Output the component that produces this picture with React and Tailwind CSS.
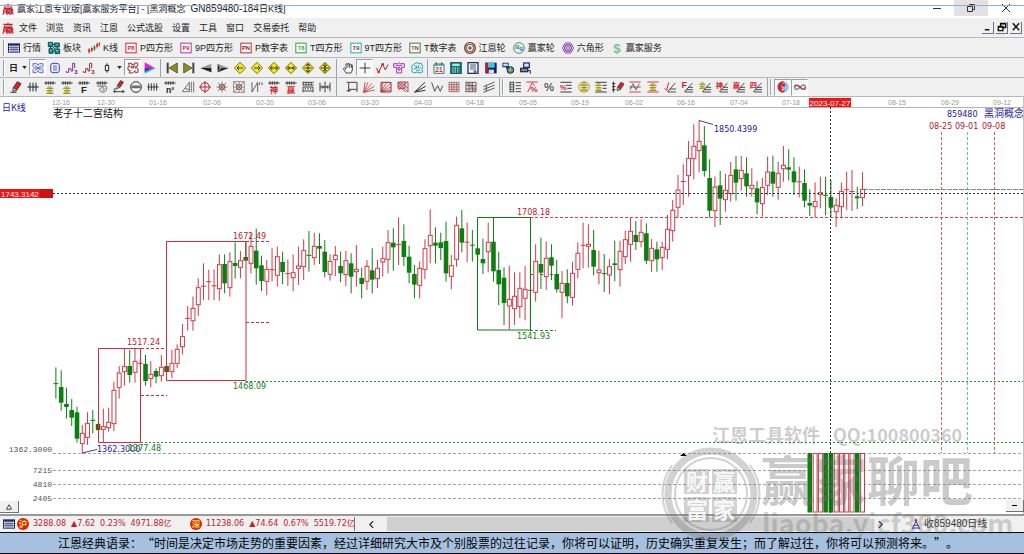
import React from "react";

const R = "#d8232a";
const K = "#222";
const Y = "#a09a10";

/* Icons are drawn on a 36-unit grid. */
function Icon({ children }) {
  return (
    <svg viewBox="0 0 36 36" className="h-3 w-3 shrink-0 overflow-visible" aria-hidden="true">
      {children}
    </svg>
  );
}

function P({ d, c = K, w = 2.6, f = "none" }) {
  return <path d={d} stroke={c} strokeWidth={w} fill={f} />;
}

function Glyph({ x = 18, y, s, c, children, bold = true }) {
  return (
    <text x={x} y={y} fontSize={s} fill={c} textAnchor="middle" fontWeight={bold ? 700 : 400}
      className="font-['Liberation_Sans','Noto_Sans_CJK_SC',sans-serif]">{children}</text>
  );
}

function LogoIcon() {
  return (
    <Icon>
      <P c="#c4202c" w={3.4} d="M4 7H32M18 2V7M7 12H29M7 12V17H29V12M3 21H13V34M5 21V31L2 35M5 27H13M16 20H24V30M16 20V30M20 23V30L15 35M21 30L25 35M27 20H32V33H35M28 20V30L25 35" />
    </Icon>
  );
}

function Boxed({ t, c, tc = R }) {
  return (
    <Icon>
      <rect x="2.5" y="3.5" width="31" height="29" fill="#fff" stroke={c} strokeWidth="3" />
      <Glyph y={24.5} s={17} c={tc}>{t}</Glyph>
    </Icon>
  );
}

function GridIcon() {
  return (
    <Icon>
      <rect x="0" y="4" width="36" height="28" fill="#1c2a6b" />
      <path d="M3 11H33V29H3Z" fill="#fff" />
      <path d="M3 17H33M3 23H33M9 11V29M15 11V29M21 11V29M27 11V29" stroke="#1c2a6b" strokeWidth="2" />
    </Icon>
  );
}

function BlocksIcon() {
  return (
    <Icon>
      <path d="M1 1H14V14H1ZM20 3H34V15H20ZM3 20H15V34H3ZM21 21H35V35H21Z" fill="#15918f" stroke="#063f45" strokeWidth="2.6" />
      <path d="M14 7H20M8 14V20M28 15V21M15 27H21M13 13L22 22" stroke="#063f45" strokeWidth="3" />
      <path d="M4 4H10V7H4ZM23 6H30V8H23ZM6 23H11V26H6ZM24 24H31V27H24Z" fill="#5fe0d8" />
    </Icon>
  );
}

function KIcon() {
  return (
    <Icon>
      <path d="M3 18V35M11 14V31M27 2V20M34 0V14" stroke={R} strokeWidth="2" />
      <path d="M1 22H6V31H1ZM9 18H14V27H9ZM25 5H30V15H25ZM32 3H36V10H32Z" fill={R} />
      <path d="M19 9V27" stroke="#0a8a0a" strokeWidth="2" />
      <path d="M17 13H22V23H17Z" fill="#0a8a0a" />
    </Icon>
  );
}

function Rings({ colors }) {
  return (
    <Icon>
      <circle cx="18" cy="18" r="16" fill="#fff" stroke={colors[0]} strokeWidth="4" />
      <circle cx="18" cy="18" r="10.5" fill="none" stroke={colors[1]} strokeWidth="3.6" />
      <circle cx="18" cy="18" r="5" fill={colors[2]} />
    </Icon>
  );
}

function HexIcon() {
  return (
    <Icon>
      <P c="#a33aa0" w={3} f="#fff" d="M10 3H26L35 18L26 33H10L1 18Z" />
      <circle cx="18" cy="18" r="10" fill="none" stroke="#3a42c8" strokeWidth="3.6" />
      <circle cx="18" cy="18" r="4.5" fill="#fff" stroke={R} strokeWidth="3" />
    </Icon>
  );
}

function BgIcon() {
  return (
    <Icon>
      <circle cx="18" cy="18" r="16" fill="#e8f4ee" stroke="#4a8f8a" strokeWidth="3" />
      <Glyph x={13} y={22} s={18} c="#2f9a3c">B</Glyph>
      <Glyph x={24} y={25} s={18} c="#3d77b8">g</Glyph>
    </Icon>
  );
}

function Diamond({ d }) {
  return (
    <Icon>
      <path d="M18 1L35 18L18 35L1 18Z" fill="#f2ee1c" stroke="#55520a" strokeWidth="2.4" />
      <path d={d} stroke="#222" strokeWidth="2.6" fill="none" />
    </Icon>
  );
}

const ticks = "M1 6H35M6 1V11M13 1V11M20 1V11M27 1V11";

function Ruler({ t, c, s = 24 }) {
  return <Icon><P d={ticks} /><Glyph y={35} s={s} c={c}>{t}</Glyph></Icon>;
}

function Levels({ t, c, s = 22, right = "#333" }) {
  return (
    <Icon>
      <P c={right} d="M12 33H36M16 26H36M21 19H36M10 33L34 6" />
      <Glyph x={10} y={22} s={s} c={c}>{t}</Glyph>
    </Icon>
  );
}

function Banded({ children, c = R }) {
  return <Icon><P c={c} d="M1 3H35M1 33H35" />{children}</Icon>;
}

const mainTools = [
  ["行情", <GridIcon />], ["板块", <BlocksIcon />], ["K线", <KIcon />],
  ["P四方形", <Boxed t="P8" c={R} />], ["9P四方形", <Boxed t="P9" c="#b030b8" />],
  ["P数字表", <Boxed t="PN" c="#c0282c" tc="#8a1a1a" />], ["T四方形", <Boxed t="T8" c="#26a838" tc="#26a838" />],
  ["9T四方形", <Boxed t="T9" c="#20a8b0" tc="#8a2a2a" />], ["T数字表", <Boxed t="TN" c="#1f8f3a" tc="#c0282c" />],
  ["江恩轮", <Rings colors={["#8c2a2a", "#3c7a4a", "#b83030"]} />], ["赢家轮", <BgIcon />], ["六角形", <HexIcon />],
  ["赢家服务", <Icon><Glyph y={32} s={40} c="#7cc28a">$</Glyph></Icon>],
];

const periodTools = [
  ["网络", true, <Icon><P c="#3d45cc" d="M3 5H15L18 10L22 5H33V14L28 18L33 23V32H22L18 26L13 32H3V23L8 18L3 13ZM8 10L28 27M28 10L8 27M9 18H27" w={2.4} /></Icon>],
  ["资料", false, <Icon><rect x="5" y="4" width="26" height="28" rx="7" fill="#eef" stroke="#3d45cc" strokeWidth="3" /><P c="#3d45cc" d="M12 12H24M12 18H24M12 24H24" w={2.4} /></Icon>],
  ["波段三", false, <Icon><P c="#8a2f96" d="M1 27V31H8V20H15V27H20V4H26V18" w={3} /><Glyph x={30} y={35} s={18} c="#5a2270">3</Glyph></Icon>],
  ["波段", false, <Icon><P c="#9b2f30" d="M1 27V31H8V20H15V27H20V4H26V18" w={3} /><Glyph x={30} y={35} s={18} c="#8d2020">3</Glyph></Icon>],
  ["蜡烛", false, <Icon><P d="M18 4V10M18 26V32M13 10H23V26H13Z" w={3} /></Icon>],
];

const viewTools = [
  ["地图", true, <Icon><P c="#a42a34" d="M4 4H14V8H22V3H32V12L27 15L33 21V31H24V26L17 33H6L10 26L3 24V14H8ZM13 13H20V18H13ZM23 10L26 20" w={3} /></Icon>],
  ["旗", false, <Icon><path d="M2 1L32 18H2Z" fill="#e81ed2" /><path d="M2 18H36L2 35Z" fill="#2fb5d6" /><path d="M2 18L24 18L2 30Z" fill="#4040a0" /></Icon>],
];

const moveTools = [
  ["最前", <Icon><path d="M2 2H8V34H2Z" fill="#444" /><path d="M34 3V33L9 18Z" fill="#8f8c1c" stroke="#333" strokeWidth="2" /></Icon>],
  ["最后", <Icon><path d="M28 2H34V34H28Z" fill="#444" /><path d="M2 3V33L27 18Z" fill="#8f8c1c" stroke="#333" strokeWidth="2" /></Icon>],
  ["向左", <Icon><path d="M34 5V31L1 18Z" fill="#999" /><path d="M34 31L1 18H34Z" fill="#222" /></Icon>],
  ["向右", <Icon><path d="M2 5V31L35 18Z" fill="#999" /><path d="M2 31L35 18H14Z" fill="#222" /><path d="M2 5V31L8 18Z" fill="#222" /></Icon>],
  ["左移", <Diamond d="M9 18H27M15 12L9 18L15 24" />],
  ["右移", <Diamond d="M9 18H27M21 12L27 18L21 24" />],
  ["扩展", <Diamond d="M7 18H29M13 12L7 18L13 24M23 12L29 18L23 24" />],
  ["收缩", <Diamond d="M5 18H31M9 13L15 18L9 23M27 13L21 18L27 23" />],
  ["放大", <Diamond d="M7 18H29M18 6V30M12 11L18 6L24 11M12 25L18 30L24 25" />],
  ["缩小", <Diamond d="M5 18H31M18 4V32M12 9L18 14L24 9M12 27L18 22L24 27" />],
];

const pointerTools = [
  ["手形", false, <Icon><P f="#fff" w={2.4} d="M12 33L4 20L7 18L12 22V6L15 5L18 8V4L21 4L23 8L26 6L28 9L31 9V24L27 33ZM18 8V17M23 8V17M28 9V18" /></Icon>],
  ["十字", true, <Icon><P d="M18 2V34M2 18H34" w={2.6} /></Icon>],
  ["折线", false, <Icon><P c="#a02a30" d="M1 18L8 30L20 6L28 24L36 8" w={3} /><circle cx="8" cy="30" r="4" fill={R} /><circle cx="20" cy="7" r="4" fill={R} /></Icon>],
  ["图章", false, <Icon><P c="#a03cb4" w={3} f="#f6e4fa" d="M2 5H14L18 2L22 5H34V16H26V33H11V16H2ZM8 10H28M15 16H21V24H15Z" /></Icon>],
  ["云图", false, <Icon><P c="#2aa4a8" w={3} f="#dff6f6" d="M11 5L18 2L25 5L31 4L35 13L33 22L35 30L25 33L18 30L9 33L2 28L4 20L1 13ZM10 12H17V20H9M22 10V18H29M16 25H27" /></Icon>],
];

const fileTools = [
  ["日历", <Icon><path d="M3 6H33V34H3Z" fill="#fff" stroke="#357a7a" strokeWidth="3" /><path d="M3 6H33V12H3Z" fill="#4fb5b5" /><P d="M10 1V8M26 1V8" /><Glyph y={31} s={20} c={R}>21</Glyph></Icon>],
  ["计算器", <Icon><rect x="2" y="1" width="32" height="34" fill="#0c6f73" stroke="#063c40" strokeWidth="2" /><path d="M7 5H29V12H7Z" fill="#a7ece6" /><path d="M7 18H29M7 24H29M7 30H29" stroke="#fff" strokeWidth="3.4" strokeDasharray="4 3" /></Icon>],
  ["报表", <Icon><rect x="3" y="2" width="30" height="32" fill="#fff" stroke="#22306b" strokeWidth="4" /><P c="#22306b" d="M9 9H27M9 15H27M9 21H20M24 18V32M19 26L24 32L29 26" /></Icon>],
  ["保存", <Icon><path d="M1 2H35V34H1Z" fill="#111c6b" /><path d="M8 2H29V17H8Z" fill="#3fc8d4" /><path d="M1 2H8V34H1Z" fill="#c8202c" /><path d="M11 23H27V34H11Z" fill="#ddd" /></Icon>],
  ["网络行情", <Icon><path d="M1 2H20V16H1ZM12 14H22V20H12Z" fill="#223a8c" /><path d="M4 5H17V12H4Z" fill="#bfe7f4" /><circle cx="25" cy="24" r="10" fill="#3b8f4a" stroke="#123" strokeWidth="3" /><P c="#ddd" d="M17 24H34M25 15V34" w={2} /></Icon>],
  ["打印", <Icon><path d="M12 1H33V19H12Z" fill="#223a8c" /><path d="M16 5H29V14H16Z" fill="#d8ecf8" /><path d="M3 17H28V31H3Z" fill="#333" /><path d="M7 22H24V26H7Z" fill="#b8a8e0" /><P d="M26 26H34V35" w={3} /></Icon>],
];

const pen = (
  <g><path d="M22 2L33 8L20 28L9 31L10 20Z" fill="#d8232a" stroke="#222" strokeWidth="2.4" /><path d="M10 20L20 27L9 31Z" fill="#fff" stroke="#222" strokeWidth="2" /></g>
);

const drawA = [
  ["画笔", <Icon>{pen}<P d="M1 34H20" /></Icon>],
  ["等分线", <Icon><P d="M1 18H35M9 5V31M18 5V31M27 5V31" w={3} /></Icon>],
  ["金尺", <Ruler t="金" c={Y} s={25} />],
  ["金段", <Ruler t="金" c={Y} s={25} />],
  ["斐波尺", <Ruler t="F" c={K} s={29} />],
  ["螺旋", <Icon><P d={ticks} /><P c="#555" d="M4 15H26C36 15 33 33 20 33C8 33 8 20 19 20C28 20 25 28 19 27" w={2.8} /></Icon>],
  ["量笔", <Icon><g transform="translate(5 -3) scale(.8)">{pen}</g><P d="M1 32H35M5 27V36M30 27V36M2 24H12" /></Icon>],
  ["量圆", <Icon><circle cx="18" cy="18" r="16" fill="none" stroke="#333" strokeWidth="3" /><P d="M4 18H32M9 13V22M15 13V22M21 13V22M27 13V22" w={2.4} /></Icon>],
  ["刻度", <Icon><P d="M1 18H35M5 7V29M13 7V29M21 7V29M29 7V29" w={2.6} /></Icon>],
  ["平方尺", <Ruler t="n²" c={K} s={26} />],
  ["角尺", <Icon><P c="#555" d="M1 32L22 4V32ZM28 2V34M35 2V34M9 22L24 27" w={2.4} /></Icon>],
  ["圆周", <Icon><circle cx="18" cy="18" r="13" fill="none" stroke="#8d2a2a" strokeWidth="3" /><P c={R} d="M18 0V36M0 18H36" w={3} /></Icon>],
  ["放射", <Icon><P c="#777" d="M18 2V34M2 18H34M6 6L30 30M30 6L6 30" w={3} /><circle cx="18" cy="18" r="8" fill="none" stroke="#a04444" strokeWidth="3" /></Icon>],
  ["方阵", <Icon><P c="#777" d="M2 2H34V34H2ZM2 2L34 34M34 2L2 34M18 2V34M2 18H34" w={2.4} /><P c="#a04444" d="M11 11H25V25H11Z" /></Icon>],
  ["回调", <Icon><P c="#555" d="M3 4V33L20 4V33M26 4V12M33 4V12" w={2.8} /></Icon>],
  ["神尺", <Ruler t="神" c={R} s={25} />],
  ["赢尺", <Ruler t="赢" c={R} s={25} />],
  ["周期", <Icon><P d="M1 4H35M1 12H35M4 4V12M12 4V12M20 4V12M28 4V12M3 34V18H33V34M10 20V26M18 20V26M26 20V26M3 30H33" w={2.4} /></Icon>],
  ["对称", <Icon><P d="M3 5V31M18 2V34M33 5V31M3 18H33M9 13L13 18L9 23M27 13L23 18L27 23" w={2.6} /></Icon>],
];

const drawB = [
  ["矩形", <Icon><P c="#444" d="M8 4H33V25H8ZM2 4H8M8 25V33M2 29H14M33 25V33" w={3} /></Icon>],
  ["扇形", <Icon><P c="#c03030" d="M2 34L6 3M2 34L15 4M2 34L27 7M2 34L34 16M2 34L35 27" w={2.4} /></Icon>],
  ["方扇", <Icon><P c="#712" d="M3 4H33V33H3Z" w={2.6} /><P c="#c03030" d="M3 33L9 4M3 33L20 4M3 33L33 6M3 33L33 18M3 33L33 27" w={2.4} /></Icon>],
  ["网扇", <Icon><path d="M3 3H33L3 33Z" fill="#e8b0b0" /><P c="#a02c40" d="M3 3H33V33M3 3L33 33M3 3V22H24V3M10 3L33 22M3 12L26 33" w={2.4} /></Icon>],
  ["速度线", <Icon><P d="M2 33L33 4M2 33L35 16M2 33L34 28" w={2.8} /></Icon>],
  ["波浪", <Icon><P c="#444" d="M2 4L11 31L20 14L28 31L35 14" w={2.8} /></Icon>],
  ["网格", <Icon><P c="#a05050" d="M3 4H33V32H3ZM3 11H33M3 18H33M3 25H33M11 4V32M18 4V32M26 4V32" w={2.4} /></Icon>],
  ["斜网", <Icon><P c="#444" d="M3 2V34M3 4H33V32H3M12 4V32M22 4V32M3 14H33M3 24H33" w={2.4} /><P c="#b04040" d="M3 4L33 32M12 4L33 24" w={2.4} /></Icon>],
  ["通道", <Icon><P c="#444" d="M1 17L35 3M1 26L35 12M1 34L35 21M10 13V30" w={2.6} /></Icon>],
];

const drawC = [
  ["标尺", <Icon><P d="M3 2V34M14 2V34M3 4H14M3 11H14M3 18H14M3 25H14M3 32H14M20 5H36M20 14H36M20 23H36M20 32H36" w={2.4} /></Icon>],
  ["百分线", <Icon><P c={R} d="M1 3H35M5 33L19 5L26 14" w={2.6} /><Glyph x={24} y={33} s={24} c={R}>%</Glyph></Icon>],
  ["百分比", <Icon><Glyph y={30} s={34} c={K} bold={false}>%</Glyph></Icon>],
  ["百分层", <Icon><P d="M1 4H35M18 13H35M22 22H35M1 33H35" /><Glyph x={10} y={28} s={22} c={R}>%</Glyph></Icon>],
  ["金圆", <Icon><circle cx="18" cy="18" r="16" fill="none" stroke={Y} strokeWidth="2.6" /><Glyph y={28} s={26} c={Y}>金</Glyph></Icon>],
  ["金层", <Icon><P d="M1 4H35M23 13H35M23 22H35M1 33H35" /><Glyph x={11} y={28} s={23} c={Y}>金</Glyph></Icon>],
  ["量柱笔", <Icon><P d="M4 2V34M1 8H10M1 17H10M1 26H10" w={3} /><g transform="translate(8 2) scale(.85)">{pen}</g></Icon>],
  ["波带", <Banded><P c="#555" d="M1 18H35M3 27L12 8L21 27L31 8" /></Banded>],
  ["金带", <Banded><Glyph y={28} s={25} c={Y}>金</Glyph></Banded>],
  ["角度层", <Icon><P c="#333" d="M12 33H36M18 24H36M10 33L34 6" /><P c={R} d="M2 22L8 28L14 4" w={3} /></Icon>],
  ["斐波层", <Levels t="F" c={R} s={27} />],
  ["金线层", <Levels t="金" c={Y} />],
  ["神层", <Levels t="神" c={R} />],
  ["赢层", <Levels t="赢" c={R} />],
  ["四层", <Levels t="四" c={R} />],
];

const drawD = [
  ["太极", <Icon><circle cx="18" cy="18" r="17" fill="#8fc4ee" /><path d="M22 1A17 17 0 1 0 16 35C26 32 24 26 18 24C10 20 14 6 22 1Z" fill="#d8232a" /><circle cx="20" cy="12" r="5" fill="#d8232a" /><circle cx="17" cy="26" r="3" fill="#fff" /></Icon>],
  ["无限", <Icon><P c="#3a8fc8" d="M2 20C4 28 12 26 18 19C24 11 32 10 34 17" w={4.4} /><P c="#c83030" d="M2 20C1 11 10 10 18 18C26 28 35 27 34 17" w={4.4} /></Icon>],
];

function Grip() {
  return <span className="h-4 w-[2px] shrink-0 border-l border-gray-400 bg-white" />;
}

function Tool({ name, pressed = false, children }) {
  return (
    <button type="button" aria-label={name} title={name} aria-pressed={pressed}
      className={pressed
        ? "flex h-[17px] w-[17px] shrink-0 items-center justify-center border border-r-white border-b-white border-gray-400 bg-[#f8f8f8]"
        : "flex h-[17px] w-[17px] shrink-0 items-center justify-center"}>
      {children}
    </button>
  );
}

function Drop() {
  return (
    <svg viewBox="0 0 6 4" className="h-[3px] w-[5px] shrink-0" aria-hidden="true"><path d="M0 0H6L3 4Z" fill="#222" /></svg>
  );
}

/* Candles: colour, high, body top, body bottom, low, in thirds of a unit below the segment's base. */
const segments = [
  [330, "g112,160,162,206 g121,171,218,242 g173,222,231,266 g207,240,263,288 g230,247,326,338 r285,310,341,371 r247,280,322,345 g240,270,272,310 d280,282,300,302 r236,290,298,336 r233,277,293,305 r155,181,281,303 r108,129,172,206 r55,110,125,167 g60,108,135,158 r55,94,127,158 r88,99,101,112 g75,102,153,167 r94,133,146,172 g115,123,140,160 r75,112,137,155 d105,108,126,130"],
  [210, "r420,460,485,505 r403,418,460,475 r342,380,410,433 r288,324,326,362 r260,295,332,362 r205,233,284,318 r160,227,230,270 r180,213,217,270 r178,226,229,270 r133,164,236,272 g133,162,220,250 r127,155,233,260 g97,159,168,206 r123,152,172,205 g97,141,152,152 r70,109,160,190 g56,122,175,224 g137,166,213,243 r150,178,214,256 r115,177,181,215 r110,140,196,230 g125,156,186,222 r148,190,192,228 r133,188,203,244 r110,168,175,225 r88,122,170,210 g63,135,137,185 r68,109,143,165 g70,108,116,162 g90,125,186,202 r133,154,193,212 r108,136,149,198 g125,168,190,216 r123,152,194,228 g130,160,200,250 r105,178,185,230 g173,204,222,265 r150,169,214,240 g115,181,209,250 r150,175,206,234 r110,146,156,200 r60,98,148,190 g55,98,112,182 r22,103,105,165"],
  [190, "g103,153,201,228 g167,200,248,280 g225,252,284,325 r215,235,286,325 r148,176,238,268 r58,136,167,220 g112,158,167,220 g128,157,174,210 g95,153,250,275 r195,227,259,298 r80,106,208,230 g60,115,158,187 r97,155,158,216 g120,164,167,215 g172,175,194,215 g146,207,220,252 r98,157,185,247 g83,155,244,275 g185,240,283,345 g232,263,339,405 r227,328,348,418 r247,319,356,405 r247,295,350,384 r228,298,325,391 r215,300,302,415 r163,214,307,335 g143,222,248,297 r155,205,260,300 g163,202,227,270 g210,252,298,308 r243,280,307,385 g238,279,319,340 r215,250,322,347 r157,190,238,265 r98,164,168,235 r103,163,169,233 g120,180,230,256 r182,240,248,283 g192,249,253,306 r207,230,255,312 g152,220,225,273 r152,184,239,290 r122,149,200,222 r83,124,163,215 g93,135,156,180 r88,127,155,172 g100,130,212,222 r147,175,212,246 g155,178,208,245 r155,172,203,240 r75,118,178,208 r30,61,122,155"],
  [100, "r225,270,322,352 r193,243,246,315 r123,175,227,290 r73,139,176,238 r62,124,152,217 g78,136,213,230 g178,234,332,353 r230,261,332,381 g213,256,296,375 r222,271,299,335 r186,226,281,305 g168,208,248,302 r168,211,236,272 g172,220,259,290 r205,256,265,290 g243,265,307,343 r234,262,311,350 r170,216,256,285 g167,215,251,290 r185,220,262,299 r138,196,206,245 g148,202,209,242 g172,214,247,285 r200,244,247,292 g208,249,302,322 g268,309,317,348 r247,305,320,352 r230,278,284,325 g230,285,287,346 g240,291,323,350 r295,316,335,381 r248,274,320,355 r215,267,271,330 r210,273,276,333 g260,289,295,327 r217,268,293,318"],
];

const candles = segments
  .flatMap(([base, rows]) => rows.split(" ").map((s) => [s[0], ...s.slice(1).split(",").map((v) => base + v / 3)]))
  .map(([k, h, t, b, l], i) => ({ k, h, t, b, l, x: 55.9 + i * 5.272 }));

const RED = "#cf3a48";
const GREEN = "#0d7f12";

function Candle({ k, h, t, b, l, x }) {
  const c = k === "g" ? GREEN : k === "d" ? "#4d5a08" : RED;
  const thin = b - t < 1.6;
  return (
    <g>
      {k === "r" && !thin
        ? <path d={`M${x} ${h}V${t}M${x} ${b}V${l}`} stroke={c} />
        : <path d={`M${x} ${h}V${l}`} stroke={c} />}
      {thin
        ? <path d={`M${x - 2.5} ${(t + b) / 2}H${x + 2.5}`} stroke={c} />
        : k === "r"
          ? <rect x={x - 1.9} y={t} width="3.9" height={b - t} fill="#fff" stroke={c} />
          : <rect x={x - 2.3} y={t} width="4.6" height={b - t} fill={c} />}
    </g>
  );
}

const dates = [[61, "12-16"], [106, "12-30"], [158, "01-16"], [212, "02-06"], [265, "02-20"], [317, "03-06"], [370, "03-20"], [423, "04-03"], [475, "04-18"], [528, "05-05"], [580, "05-19"], [634, "06-02"], [686, "06-16"], [739, "07-04"], [791, "07-18"], [897, "08-15"], [950, "08-29"], [1002, "09-12"]];

const priceLabels = [
  [714, 132, "1850.4399", "#1a1a9c"], [97, 452, "1362.3000", "#1a1a9c"], [128, 451, "1377.48", GREEN],
  [127, 345, "1517.24", "#c22032"], [233, 389, "1468.09", GREEN], [233, 239, "1672.49", "#c22032"],
  [517, 215, "1708.18", "#c22032"], [517, 339, "1541.93", GREEN],
  [929, 129, "08-25", "#b02030"], [955, 129, "09-01", "#b02030"], [982, 129, "09-08", "#b02030"],
];

function Chart() {
  return (
    <svg viewBox="0 97 1024 417" className="block h-auto w-full bg-white" role="img" aria-label="黑洞概念 日K线">
      <path d="M53 107.500H1023" stroke="#b4b4b4" />
      <g className="font-['Liberation_Sans',sans-serif] text-[7px]" fill="#999" textAnchor="middle">
        {dates.map(([x, t]) => <text key={t} x={x} y={105}>{t}</text>)}
      </g>
      <g className="font-['Noto_Sans_CJK_SC',sans-serif]">
        <text x="2" y="111" fill="#1a1ab8" className="text-[9px]">日K线</text>
        <text x="53" y="117" fill="#111" className="text-[10px]">老子十二宫结构</text>
        <text x="947" y="117" fill="#1a1a9c" className="font-['DejaVu_Sans',sans-serif] text-[8px]">859480</text>
        <text x="984" y="117" fill="#1a1a9c" className="text-[10px]">黑洞概念</text>
      </g>

      <g stroke="#a4a4a4" strokeDasharray="3 2">
        <path d="M53 453.500H1023M53 470.500H1023M53 484.500H1023M53 498.500H1023" />
      </g>
      <path d="M246 381.500H1023M141 442.500H1023" stroke="#1f9a2a" strokeDasharray="2 2" />
      <path d="M530 217.500H1023" stroke="#d8404e" strokeDasharray="3 2" />
      <path d="M246 241.500H271M246 322.500H271M141 348.500H167M141 395.500H167" stroke="#d02c40" strokeDasharray="3 2" />
      <path d="M530 274.500H556M530 330.500H556" stroke="#2c8a20" strokeDasharray="3 2" />
      <path d="M941.500 132V453M994.500 132V453" stroke="#d05c68" strokeDasharray="3 2" />
      <path d="M967.500 132V453" stroke="#5cb8ee" strokeDasharray="3 2" />
      <path d="M863 189.500H1023" stroke="#888" strokeDasharray="5 1" />

      {candles.map((c) => <Candle key={c.x} {...c} />)}
      {candles.slice(143).map((c) => c.k === "g"
        ? <rect key={c.x} x={c.x - 2.3} y="453" width="4.600" height="59.500" fill={GREEN} />
        : <rect key={c.x} x={c.x - 1.9} y="453.500" width="3.900" height="58.500" fill="#fff" stroke={RED} />)}

      <path d="M98.500 348.500H140.500V442.500H98.500ZM166.500 241.500H246V380.500H166.500Z" fill="none" stroke="#c8303e" />
      <path d="M477.500 217.500H530.500V330H477.500Z" fill="none" stroke={GREEN} />
      <path d="M53 193.500H1023M830.500 107V513" stroke="#333" strokeDasharray="2 2" />
      <path d="M699 120.500L713 124.500M82 453L97 449.500" stroke="#3a3ab0" />
      <path d="M680 456L683.500 453L687 456Z" fill="#000" />

      <g className="font-['DejaVu_Sans',sans-serif] text-[8px]">
        {priceLabels.map(([x, y, t, c]) => <text key={t} x={x} y={y} fill={c}>{t}</text>)}
      </g>
      <g className="font-['Liberation_Mono',monospace] text-[8px]" fill="#555" textAnchor="end">
        <text x="52" y="452">1362.3000</text><text x="52" y="473">7215</text>
        <text x="52" y="487">4810</text><text x="52" y="501">2405</text>
      </g>

      <rect x="0" y="189" width="53" height="9" fill="#f01414" />
      <rect x="40" y="189" width="13" height="9" fill="#d01010" />
      <text x="1" y="197" fill="#fff" className="font-['Liberation_Sans',sans-serif] text-[8px]">1743.3142</text>
      <rect x="809" y="98" width="42" height="9" fill="#f01414" />
      <text x="830" y="106" fill="#fff" textAnchor="middle" className="font-['Liberation_Sans',sans-serif] text-[8px]">2023-07-27</text>
      <path d="M1023.500 97V514" stroke="#c4c4c4" />
    </svg>
  );
}

function Watermark() {
  return (
    <svg viewBox="0 0 1024 554" className="pointer-events-none absolute inset-x-0 top-0 h-auto w-full" aria-hidden="true">
      <g fill="#6b6b6b" fillOpacity=".36" className="font-['Noto_Sans_CJK_SC',sans-serif] font-bold">
        <text x="712" y="442" className="text-[18px]">江恩工具软件</text>
        <text x="833" y="442" className="text-[18px]">QQ:100800360</text>
        <text x="761" y="501" className="text-[53px]">赢家聊吧</text>
        <text x="762" y="534" className="text-[27px]" fillOpacity=".28">liaoba.yicf360.com</text>
      </g>
      <g fill="none" stroke="#6b6b6b" strokeOpacity=".3">
        <circle cx="711" cy="494" r="43" strokeWidth="7" />
        <circle cx="711" cy="494" r="36" strokeWidth="2" />
        <path d="M672 465A49 49 0 0 0 672 523M750 465A49 49 0 0 1 750 523" strokeWidth="2" />
      </g>
      <path d="M684 469H709V494H684ZM712 469H737V494H712ZM684 497H709V522H684ZM712 497H737V522H712Z" fill="#6b6b6b" fillOpacity=".3" />
      <g fill="#fff" fillOpacity=".9" textAnchor="middle" className="font-['Noto_Sans_CJK_SC',sans-serif] text-[22px] font-bold">
        <text x="697" y="490">财</text><text x="724" y="490">赢</text>
        <text x="697" y="518">富</text><text x="724" y="518">家</text>
      </g>
    </svg>
  );
}

function Group({ items, className }) {
  return (
    <div className={`flex shrink-0 items-center justify-between ${className}`}>
      {items.map((it) => it.length === 3
        ? <Tool key={it[0]} name={it[0]} pressed={it[1]}>{it[2]}</Tool>
        : <Tool key={it[0]} name={it[0]}>{it[1]}</Tool>)}
    </div>
  );
}

function Divider() {
  return <span className="h-[18px] w-px shrink-0 bg-gray-400" />;
}

function Quote({ badge, values }) {
  return (
    <div className="flex shrink-0 items-center gap-1">
      <svg viewBox="0 0 36 36" className="h-3 w-3 shrink-0" aria-hidden="true">
        <circle cx="18" cy="18" r="18" fill="#e0200c" />
        <text x="18" y="27" fontSize="25" fontWeight="700" fill="#ffe14a" textAnchor="middle">{badge}</text>
      </svg>
      <div className="flex gap-[5px]">{values.map((v) => <span key={v}>{v}</span>)}</div>
    </div>
  );
}

export default function App() {
  return (
    <div className="relative flex flex-col overflow-hidden bg-white font-['Liberation_Sans','Noto_Sans_CJK_SC',sans-serif] text-[9px] leading-3 text-[#222]">
      <header className="relative flex h-[18px] items-center justify-between overflow-hidden bg-white pl-[2px]">
        <h1 className="flex items-center gap-[3px] whitespace-pre">
          <LogoIcon />
          <span>赢家江恩专业版[赢家服务平台] - [黑洞概念  <span className="text-[10px]">GN859480-184</span>日K线]</span>
        </h1>
        <div className="flex h-full items-start">
          <button type="button" aria-label="最小化" className="flex h-4 w-[34px] items-center justify-center">
            <svg viewBox="0 0 8 8" className="h-2 w-2"><path d="M0 4.500H8" stroke="#333" /></svg>
          </button>
          <button type="button" aria-label="还原" className="flex h-4 w-[34px] items-center justify-center bg-[#e2e2e2]">
            <svg viewBox="0 0 8 8" className="h-2 w-2" fill="none" stroke="#333"><path d="M.5 2.500H5.500V7.500H.5ZM2.500 2V.5H7.500V5.500H6" /></svg>
          </button>
          <button type="button" aria-label="关闭" className="flex h-4 w-9 items-center justify-center">
            <svg viewBox="0 0 8 8" className="h-2 w-2" stroke="#333"><path d="M0 0L8 8M8 0L0 8" /></svg>
          </button>
        </div>
        <span className="absolute inset-x-0 top-0 h-[6px] border-b border-[#8fb0d4]" />
      </header>

      <nav className="flex h-5 items-center justify-between border-b border-[#b8b8b8] bg-[#f0f0f0] pr-[2px] pl-[2px]">
        <div className="flex items-center gap-[9px]">
          <div className="flex items-center gap-[5px]"><LogoIcon /><button type="button">文件</button></div>
          {["浏览", "资讯", "江恩", "公式选股", "设置", "工具", "窗口", "交易委托", "帮助"].map((m) => (
            <button key={m} type="button">{m}</button>
          ))}
        </div>
        <div className="flex gap-[2px]">
          {[["最小化子窗口", "M2 8.500H7"], ["还原子窗口", "M1.500 5H6.500V9.500H1.500ZM1 5.500H7M4 4V1.500H9.500V6H7M4 2H9.500"], ["关闭子窗口", "M2 1.500L9 9M9 1.500L2 9"]].map(([n, d]) => (
            <button key={n} type="button" aria-label={n} className="flex h-3 w-3 items-center justify-center border-r border-b border-gray-500 bg-[#f0f0f0]">
              <svg viewBox="0 0 11 11" className="h-[10px] w-[10px]"><path d={d} fill="none" stroke="#111" strokeWidth="1.600" /></svg>
            </button>
          ))}
        </div>
      </nav>

      <div className="flex h-5 items-center gap-[3px] border-b border-[#b8b8b8] bg-[#f0f0f0] pl-[3px]">
        <Grip />
        <div className="flex items-center gap-[7px]">
          {mainTools.map(([t, icon]) => (
            <button key={t} type="button" className="flex items-center gap-[3px] whitespace-nowrap">{icon}<span>{t}</span></button>
          ))}
        </div>
      </div>

      <div className="flex h-5 items-center gap-[2px] border-b border-[#b8b8b8] bg-[#f0f0f0] pl-[3px]">
        <Grip />
        <button type="button" className="flex w-5 items-center justify-between pl-[2px] font-bold">日<Drop /></button>
        <Group items={periodTools} className="w-[86px]" />
        <Drop />
        <Group items={viewTools} className="w-[34px]" />
        <Divider />
        <Group items={moveTools} className="w-[171px]" />
        <Divider />
        <Group items={pointerTools} className="w-[86px]" />
        <Divider />
        <Group items={fileTools} className="w-[104px]" />
      </div>

      <div className="flex h-[19px] items-center gap-[2px] border-b border-[#b8b8b8] bg-[#f0f0f0] pl-[3px]">
        <Grip />
        <Group items={drawA} className="w-[327px]" />
        <Divider />
        <Group items={drawB} className="ml-1 w-[154px]" />
        <Divider /><Grip />
        <Group items={drawC} className="w-[259px]" />
        <Divider /><Grip />
        <div className="flex shrink-0">
          {drawD.map(([n, i]) => <Tool key={n} name={n} pressed>{i}</Tool>)}
        </div>
      </div>

      <main className="relative">
        <Chart />
        <button type="button" aria-label="展开" className="absolute bottom-[1px] left-0 flex h-3 w-[19px] items-center justify-center border-r border-b border-gray-500 bg-[#f0f0f0]">
          <svg viewBox="0 0 8 8" className="h-[6px] w-[6px]"><path d="M4 1L7.500 7H.5Z" fill="none" stroke="#111" /></svg>
        </button>
        <button type="button" aria-label="收起" className="absolute right-0 bottom-[2px] flex h-3 w-[18px] items-center justify-center border-r border-b border-gray-500 bg-[#f0f0f0]">
          <span className="h-px w-[5px] bg-black" />
        </button>
      </main>

      <div className="flex h-[18px] items-center border-t-2 border-[#999] bg-[#f0f0f0] pl-[3px] font-['DejaVu_Sans','Noto_Sans_CJK_SC',sans-serif] text-[8px] whitespace-pre text-[#c4202c]">
        <div className="flex w-[351px] shrink-0 items-center gap-[2px] overflow-hidden">
          <GridIcon />
          <div className="w-[171px] shrink-0"><Quote badge="沪" values={["3288.08", "▲7.62", "0.23%", "4971.88亿"]} /></div>
          <Quote badge="深" values={["11238.06", "▲74.64", "0.67%", "5519.72亿"]} />
        </div>
        <div className="flex h-[14px] grow items-center border-l border-gray-500">
          <button type="button" aria-label="向左滚动" className="flex h-full w-8 items-center justify-center">
            <svg viewBox="0 0 6 8" className="h-[7px] w-[5px]"><path d="M5 0L1 4L5 8" fill="none" stroke="#222" strokeWidth="1.400" /></svg>
          </button>
          <span className="h-full grow bg-[#cfcfcf]" />
          <button type="button" aria-label="向右滚动" className="flex h-full w-5 items-center justify-center">
            <svg viewBox="0 0 6 8" className="h-[7px] w-[5px]"><path d="M1 0L5 4L1 8" fill="none" stroke="#222" strokeWidth="1.400" /></svg>
          </button>
        </div>
        <div className="flex w-[134px] shrink-0 items-center gap-[2px] pl-[20px] font-['Liberation_Sans','Noto_Sans_CJK_SC',sans-serif] text-[10px] text-[#333]">
          <Icon><P c="#2c3c9c" w={3} d="M18 2V12M18 10L6 34M18 10L30 34M12 22H24M8 30H28" /><circle cx="18" cy="8" r="4" fill="#c03030" /></Icon>
          收859480日线
        </div>
      </div>

      <footer className="h-[22px] border-t border-b border-black bg-[#a6c1df] pl-[58px] font-['Noto_Sans_CJK_SC',sans-serif] text-[12px] leading-5 whitespace-nowrap text-black [text-spacing-trim:space-all]" lang="zh-CN">
        江恩经典语录：“时间是决定市场走势的重要因素，经过详细研究大市及个别股票的过往记录，你将可以证明，历史确实重复发生；而了解过往，你将可以预测将来。”。
      </footer>
      <Watermark />
    </div>
  );
}
